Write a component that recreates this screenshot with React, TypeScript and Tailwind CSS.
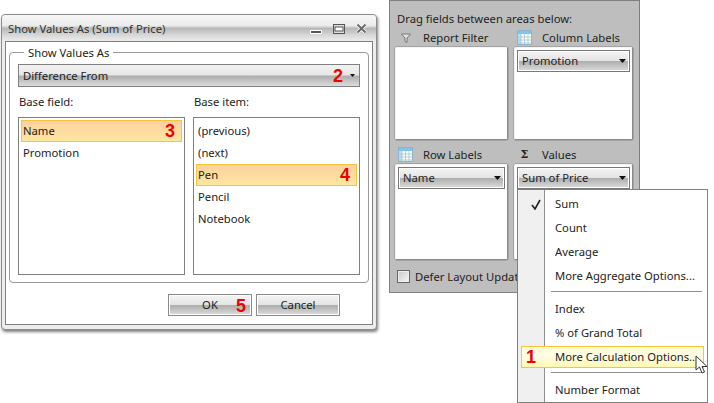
import React from 'react';

const glossy = 'bg-[linear-gradient(180deg,#f4f4f4_0%,#e4e4e4_48%,#acacac_50%,#c4c4c4_75%,#dcdcdc_100%)]';
const selected = 'border border-[#f5c63c] bg-[linear-gradient(180deg,#fdd1a0_0%,#fde7a0_100%)]';

function Mark({ n }: { n: number }) {
  return <span className="font-['Liberation_Sans',sans-serif] text-[18px] font-bold leading-none text-[#f00000]">{n}</span>;
}

function Caret({ small }: { small?: boolean }) {
  return (
    <svg width={small ? 5 : 7} height={small ? 3 : 4} viewBox="0 0 7 4" className="shrink-0">
      <path d="M0 0h7L3.500 4z" fill="#111" />
    </svg>
  );
}

function Combo({ label }: { label: string }) {
  return (
    <div className={`flex h-[22px] items-center justify-between border border-[#777] pl-[4px] pr-[3px] shadow-[inset_0_0_0_1px_#fff] ${glossy}`}>
      <span>{label}</span>
      <Caret />
    </div>
  );
}

function GridIcon() {
  return (
    <svg width="15" height="15" viewBox="0 0 15 15" className="shrink-0">
      <rect x="0.500" y="0.500" width="14" height="14" fill="#fdfdf2" stroke="#8fb4cf" />
      <rect x="1" y="1" width="13" height="3" fill="#7cc5ea" />
      <rect x="1" y="4" width="3" height="10" fill="#b8e2f4" />
      <path d="M1 7h13M1 10h13M1 13h13M4 1v13M7.500 1v13M11 1v13" stroke="#9fc4d8" strokeWidth="0.8" />
    </svg>
  );
}

function AreaHead({ icon, label, gap }: { icon: React.ReactNode; label: string; gap: string }) {
  return (
    <div className="flex h-[19px] items-center pl-[3px]">
      <div className="flex w-[15px] justify-center">{icon}</div>
      <span className={gap}>{label}</span>
    </div>
  );
}

function Area({ h, children }: { h: string; children?: React.ReactNode }) {
  return <div className={`${h} rounded-[2px] border border-[#8a8a8a] border-t-[#f4f4f4] border-l-[#f4f4f4] bg-white p-[2px] shadow-[0_0_0_0.5px_#888]`}>{children}</div>;
}

function MenuItem({ label, check, mark, active }: { label: string; check?: boolean; mark?: number; active?: boolean }) {
  return (
    <div className={`mx-[3px] flex items-center ${active ? 'mt-px h-[22px] border border-[#f5c63c] bg-[linear-gradient(180deg,#fffbd0_0%,#fffde8_45%,#fff8b0_100%)]' : 'h-[24px]'}`}>
      <div className={`flex shrink-0 items-center ${active ? 'w-[33px] justify-start pl-[4px]' : 'w-[34px] justify-center'}`}>
        {check && (
          <svg width="10" height="11" viewBox="0 0 10 11" className="ml-[-4px]">
            <path d="M1 6l3 4L9 1" fill="none" stroke="#222" strokeWidth="1.6" />
          </svg>
        )}
        {mark && <Mark n={mark} />}
      </div>
      <span className="whitespace-nowrap">{label}</span>
    </div>
  );
}

function Button({ label, mark }: { label: string; mark?: number }) {
  return (
    <div className={`relative flex h-[22px] w-[84px] items-center justify-center border border-[#8a8a8a] shadow-[inset_0_0_0_1px_#fff] ${glossy}`}>
      <span>{label}</span>
      {mark && <div className="absolute left-[67px] top-[2px]"><Mark n={mark} /></div>}
    </div>
  );
}

function ListBox({ children }: { children: React.ReactNode }) {
  return <div className="h-[158px] flex-1 border border-[#808080] bg-white p-[2px]">{children}</div>;
}

function ListRow({ label, mark, active }: { label: string; mark?: number; active?: boolean }) {
  return (
    <div className={`flex h-[22px] items-center justify-between pl-[1px] ${active ? selected : 'border border-transparent'} pr-[6px]`}>
      <span>{label}</span>
      {mark && <Mark n={mark} />}
    </div>
  );
}

export default function App() {
  return (
    <div className="relative h-[403px] w-[714px] overflow-hidden bg-white font-['Noto_Sans',sans-serif] text-[11.25px] leading-none text-[#222]">
      {/* field list panel */}
      <div className="absolute left-[389px] top-0 h-[293px] w-[251px] border border-[#808080] border-r-[#6b7f95] bg-[#bebebe] px-[5px]">
        <div className="flex h-[27px] items-end pb-[4px] pl-[2px]">Drag fields between areas below:</div>
        <div className="grid grid-cols-[113px_119px] gap-x-[6px]">
          <div>
            <AreaHead
              label="Report Filter"
              gap="ml-[10px]"
              icon={
                <svg width="10" height="10" viewBox="0 0 10 10">
                  <path d="M0.500 1h9L6 5v4.500L4 8.500V5z" fill="#e4e4e4" stroke="#777" />
                </svg>
              }
            />
            <Area h="h-[93px]" />
          </div>
          <div>
            <AreaHead label="Column Labels" gap="ml-[10px]" icon={<GridIcon />} />
            <Area h="h-[93px]"><Combo label="Promotion" /></Area>
          </div>
          <div className="pt-[5px]">
            <AreaHead label="Row Labels" gap="ml-[10px]" icon={<GridIcon />} />
            <Area h="h-[96px]"><Combo label="Name" /></Area>
          </div>
          <div className="pt-[5px]">
            <AreaHead label="Values" gap="ml-[10px]" icon={<span className="font-['DejaVu_Serif',serif] text-[11px] font-bold">Σ</span>} />
            <Area h="h-[96px]"><Combo label="Sum of Price" /></Area>
          </div>
        </div>
        <div className="mt-[10px] flex items-center pl-[2px]">
          <div className="h-[13px] w-[13px] border border-[#666] bg-[linear-gradient(135deg,#c8c8c8,#f8f8f8)] shadow-[inset_0_0_0_1px_#eee]" />
          <span className="ml-[5px] whitespace-nowrap">Defer Layout Update</span>
        </div>
      </div>

      {/* context menu */}
      <div className="absolute left-[517px] top-[189px] h-[214px] w-[191px] border border-[#808080] bg-[linear-gradient(90deg,#f0f0f0_0,#f0f0f0_26px,#909090_26px,#909090_27px,#fff_27px)] pt-[2px]">
        <MenuItem label="Sum" check />
        <MenuItem label="Count" />
        <MenuItem label="Average" />
        <MenuItem label="More Aggregate Options..." />
        <div className="mb-[5px] ml-[33px] mr-[5px] mt-[3px] h-px bg-[#909090]" />
        <MenuItem label="Index" />
        <MenuItem label="% of Grand Total" />
        <MenuItem label="More Calculation Options..." mark={1} active />
        <div className="mb-[5px] ml-[33px] mr-[5px] mt-[4px] h-px bg-[#909090]" />
        <MenuItem label="Number Format" />
      </div>

      {/* mouse pointer */}
      <svg width="13" height="19" viewBox="0 0 13 19" className="absolute left-[695px] top-[355px]">
        <path d="M1 1v14l3.500-3 2.500 6 2.500-1-2.500-5.500H12z" fill="#fff" stroke="#333" strokeWidth="1" />
      </svg>

      {/* dialog */}
      <div className="absolute left-[1px] top-[14px] flex h-[316px] w-[376px] flex-col rounded-[4px] border border-[#8c8c8c] bg-[#ededed] px-[3px] pb-[4px] shadow-[1px_2px_3px_rgba(0,0,0,0.5)]">
        <div className="mx-[-3px] flex h-[26px] shrink-0 items-center justify-between rounded-t-[4px] bg-[linear-gradient(180deg,#f6f6f6_0%,#ececec_40%,#b8b8b8_52%,#d8d8d8_78%,#ececec_100%)] pl-[6px] pr-[9px] pt-[1px]">
          <span className="text-[#333]">Show Values As (Sum of Price)</span>
          <div className="flex items-center gap-[11px]">
            <svg width="12" height="6" viewBox="0 0 12 6" className="mt-[6px]">
              <rect x="0.500" y="1.500" width="11" height="3" fill="#555" stroke="#fff" />
            </svg>
            <svg width="12" height="10" viewBox="0 0 12 10">
              <rect x="0.500" y="0.500" width="11" height="9" fill="#ddd" stroke="#555" strokeWidth="1" />
              <rect x="2" y="3" width="8" height="4" fill="#fff" stroke="#555" strokeWidth="1" />
            </svg>
            <svg width="11" height="11" viewBox="0 0 11 11">
              <path d="M1.500 1.500l8 8M9.500 1.500l-8 8" stroke="#fff" strokeWidth="3.500" />
              <path d="M1.500 1.500l8 8M9.500 1.500l-8 8" stroke="#666" strokeWidth="1.800" />
            </svg>
          </div>
        </div>

        <div className="flex flex-1 flex-col border border-[#808080] bg-white px-[3px] pb-[8px]">
          <fieldset className="mt-[5px] h-[236px] rounded-[4px] border border-[#999] px-[8px]">
            <legend className="ml-[6px] px-[4px]">Show Values As</legend>
            <div className="mt-[6px] flex h-[23px] items-center justify-between border border-[#808080] pl-[4px] pr-[4px] bg-[linear-gradient(180deg,#f2f2f2_0%,#e6e6e6_48%,#adadad_52%,#c8c8c8_80%,#dcdcdc_100%)]">
              <span>Difference From</span>
              <div className="flex items-center gap-[7px]">
                <Mark n={2} />
                <Caret small />
              </div>
            </div>
            <div className="mt-[9px] flex gap-[8px]">
              <div className="flex-1">
                <div className="mb-[9px] ml-[1px]">Base field:</div>
                <ListBox>
                  <ListRow label="Name" mark={3} active />
                  <ListRow label="Promotion" />
                </ListBox>
              </div>
              <div className="flex-1">
                <div className="mb-[9px] ml-[1px]">Base item:</div>
                <ListBox>
                  <ListRow label="(previous)" />
                  <ListRow label="(next)" />
                  <ListRow label="Pen" mark={4} active />
                  <ListRow label="Pencil" />
                  <ListRow label="Notebook" />
                </ListBox>
              </div>
            </div>
          </fieldset>
          <div className="mt-[11px] flex justify-end gap-[4px] pr-[29px]">
            <Button label="OK" mark={5} />
            <Button label="Cancel" />
          </div>
        </div>
      </div>
    </div>
  );
}
